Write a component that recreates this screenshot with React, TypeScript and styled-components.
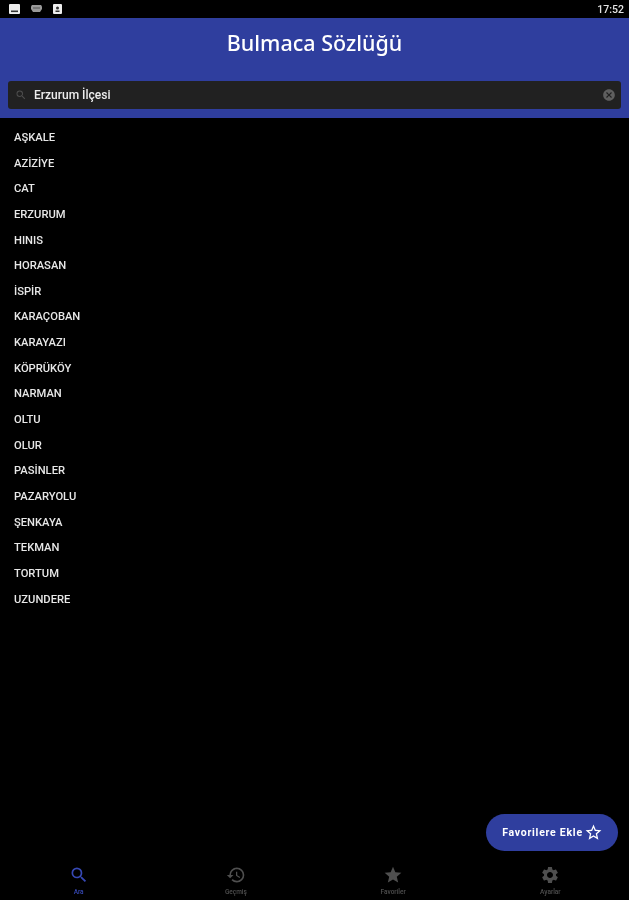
import React from "react";
import styled, { createGlobalStyle } from "styled-components";
import { MdSearch, MdHistory, MdStar, MdSettings, MdStarBorder, MdCancel } from "react-icons/md";

const Global = createGlobalStyle`
  html, body { margin: 0; padding: 0; background: #000; }
  body { font-family: "Roboto", "Liberation Sans", sans-serif; }
`;

const Screen = styled.div`
  position: relative;
  width: 629px;
  height: 900px;
  display: flex;
  flex-direction: column;
  background: #000;
  overflow: hidden;
  filter: blur(0.5px);
`;

const StatusBar = styled.div`
  height: 18px;
  flex: none;
  display: flex;
  align-items: center;
  justify-content: space-between;
  padding: 0 5px 0 9px;
  color: #e4e4e4;
`;

const StatusIcons = styled.div`
  display: flex;
  align-items: center;
  gap: 11px;
`;

const StatusTime = styled.span`
  font-size: 10.5px;
  font-weight: 500;
`;

const Header = styled.header`
  height: 100px;
  flex: none;
  box-sizing: border-box;
  background: #2f3e9e;
  padding: 8px 8px 9px;
  display: flex;
  flex-direction: column;
  justify-content: space-between;
`;

const Title = styled.h1`
  margin: 0;
  text-align: center;
  color: #fff;
  font-family: "Noto Sans", sans-serif;
  font-size: 21.5px;
  line-height: 34px;
  font-weight: 500;
`;

const SearchBar = styled.div`
  height: 28px;
  display: flex;
  align-items: center;
  background: #212121;
  border-radius: 3px;
  padding: 0 5px 0 7px;
  color: #4e4e4e;
`;

const SearchText = styled.span`
  flex: 1;
  margin-left: 7px;
  color: #eee;
  font-size: 12px;
  font-weight: 500;
`;

const List = styled.ul`
  flex: 1;
  list-style: none;
  margin: 0;
  padding: 7px 0 0 14px;
`;

const Item = styled.li`
  height: 25.65px;
  line-height: 25.65px;
  color: #e8e8e8;
  font-size: 11.2px;
  font-weight: 500;
`;

const Fab = styled.button`
  position: absolute;
  right: 11px;
  top: 814px;
  width: 132px;
  height: 37px;
  border: 0;
  border-radius: 19px;
  background: #2f3e9e;
  color: #fff;
  display: flex;
  align-items: center;
  justify-content: center;
  gap: 1px;
  padding: 0 0 0 1px;
  font-family: "Roboto", sans-serif;
  font-size: 10.5px;
  font-weight: 700;
  letter-spacing: 0.75px;
`;

const Nav = styled.nav`
  height: 50px;
  flex: none;
  display: grid;
  grid-template-columns: repeat(4, 1fr);
`;

const NavItem = styled.div<{ $active?: boolean }>`
  display: flex;
  flex-direction: column;
  align-items: center;
  padding-top: 15px;
  color: ${(p) => (p.$active ? "#3648b4" : "#4f4f4f")};
`;

const NavLabel = styled.span`
  font-size: 6.5px;
  line-height: 9px;
  margin-top: 3px;
  font-weight: 500;
`;

const names = ["AŞKALE","AZİZİYE","CAT","ERZURUM","HINIS","HORASAN","İSPİR","KARAÇOBAN","KARAYAZI","KÖPRÜKÖY","NARMAN","OLTU","OLUR","PASİNLER","PAZARYOLU","ŞENKAYA","TEKMAN","TORTUM","UZUNDERE"];

const ImageIcon = () => (
  <svg width="11" height="10" viewBox="0 0 11 10"><rect width="11" height="10" rx="1" fill="#eee"/><rect x="2" y="6.500" width="7" height="1.600" fill="#333"/></svg>
);
const CastIcon = () => (
  <svg width="11" height="8" viewBox="0 0 11 8"><path d="M0 1.500 1 0h9l1 1.500V4l-2 3H2L0 4z" fill="#999"/><rect x="2" y="2.500" width="7" height="1" fill="#555"/></svg>
);
const PersonIcon = () => (
  <svg width="9" height="10" viewBox="0 0 9 10"><rect width="9" height="10" rx="1" fill="#eee"/><circle cx="4.500" cy="4" r="1.500" fill="#333"/><rect x="2.500" y="6.500" width="4" height="1.500" fill="#333"/></svg>
);

export default function App() {
  return (
    <Screen>
      <Global />
      <StatusBar>
        <StatusIcons><ImageIcon /><CastIcon /><PersonIcon /></StatusIcons>
        <StatusTime>17:52</StatusTime>
      </StatusBar>
      <Header>
        <Title>Bulmaca Sözlüğü</Title>
        <SearchBar>
          <MdSearch size={12} />
          <SearchText>Erzurum İlçesi</SearchText>
          <MdCancel size={14} color="#5f5f5f" />
        </SearchBar>
      </Header>
      <List>{names.map((n) => <Item key={n}>{n}</Item>)}</List>
      <Fab>Favorilere Ekle<MdStarBorder size={19} /></Fab>
      <Nav>
        <NavItem $active><MdSearch size={20} /><NavLabel>Ara</NavLabel></NavItem>
        <NavItem><MdHistory size={20} /><NavLabel>Geçmiş</NavLabel></NavItem>
        <NavItem><MdStar size={20} /><NavLabel>Favoriler</NavLabel></NavItem>
        <NavItem><MdSettings size={20} /><NavLabel>Ayarlar</NavLabel></NavItem>
      </Nav>
    </Screen>
  );
}
